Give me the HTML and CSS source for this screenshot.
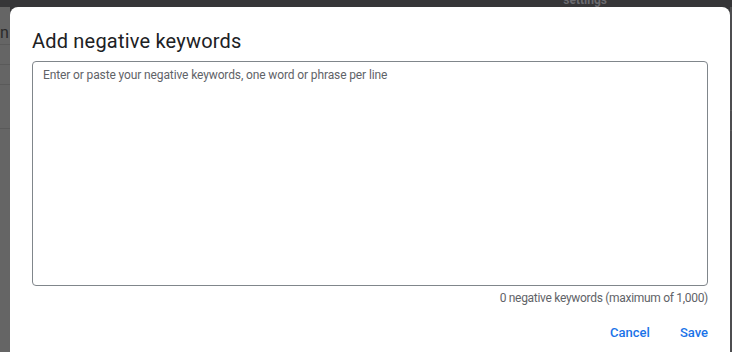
FILE: index.html
```html
<!DOCTYPE html>
<html dir="ltr" lang="en">

<head>
  <meta charset="utf-8" />
  <title>Add negative keywords</title>
  <link rel="stylesheet" href="styles.css">
</head>

<body>
  <div class="page">
    <header class="appbar">
      <span class="appbar-label">settings</span>
    </header>

    <div class="stage">
      <div class="behind behind-left">
        <span class="behind-heading">n</span>
        <div class="behind-row"></div>
        <div class="behind-row"></div>
        <div class="behind-row tall"></div>
        <div class="behind-row tall"></div>
      </div>

      <section class="dialog">
        <h2 class="dialog-title">Add negative keywords</h2>
        <textarea class="keywords" placeholder="Enter or paste your negative keywords, one word or phrase per line"></textarea>
        <div class="counter">0 negative keywords (maximum of 1,000)</div>
        <div class="actions">
          <button class="btn">Cancel</button>
          <button class="btn">Save</button>
        </div>
      </section>

      <div class="behind behind-right">
        <div class="behind-row"></div>
        <div class="behind-row tall"></div>
      </div>
    </div>
  </div>
</body>

</html>
```

FILE: styles.css
```css
html,
body {
  margin: 0;
  height: 100%;
}

body {
  font-family: Roboto, 'Liberation Sans', sans-serif;
  background: #646464;
  color: #202124;
  overflow: hidden;
}

.page {
  display: flex;
  flex-direction: column;
  height: 100%;
}

.appbar {
  height: 7px;
  flex-shrink: 0;
  background: #363638;
  overflow: hidden;
  display: flex;
  justify-content: flex-end;
  padding-right: 125px;
}

.appbar-label {
  font-size: 12px;
  font-weight: 700;
  line-height: 12px;
  margin-top: -6px;
  color: #6b6b70;
}

.stage {
  flex: 1;
  display: flex;
  background: #363638;
}

.behind {
  background: #656565;
  display: flex;
  flex-direction: column;
}

.behind-left {
  width: 10px;
  overflow: hidden;
}

.behind-right {
  width: 2px;
  background: #4e4e50;
  padding-top: 100px;
}

.behind-heading {
  font-size: 16px;
  line-height: 16px;
  margin-top: 18px;
  color: #2a2a2a;
}

.behind-row {
  height: 16px;
  border-top: 1px solid #5a5a5a;
  margin-top: 3px;
}

.behind-row.tall {
  height: 40px;
}

/* dialog */

.dialog {
  flex: 1;
  background: #fff;
  border-radius: 8px 8px 0 0;
  padding: 20px 22px 0 22px;
  display: flex;
  flex-direction: column;
}

.dialog-title {
  margin: 0;
  font-size: 20px;
  font-weight: 400;
  line-height: 28px;
  letter-spacing: 0.2px;
  color: #202124;
}

.keywords {
  margin-top: 6px;
  height: 225px;
  box-sizing: border-box;
  border: 1px solid #80868b;
  border-radius: 4px;
  padding: 5px 10px;
  font-family: Roboto, 'Liberation Sans', sans-serif;
  font-size: 12px;
  line-height: 16px;
  letter-spacing: -0.12px;
  color: #202124;
  resize: none;
  outline: none;
}

.keywords::placeholder {
  color: #5f6368;
  opacity: 1;
}

.counter {
  margin-top: 4px;
  text-align: right;
  font-size: 12px;
  line-height: 16px;
  letter-spacing: -0.3px;
  color: #5f6368;
}

.actions {
  display: flex;
  justify-content: flex-end;
  gap: 30px;
  margin-top: 17px;
}

.btn {
  border: 0;
  padding: 0;
  background: none;
  font-family: Roboto, 'Liberation Sans', sans-serif;
  font-size: 13px;
  font-weight: 500;
  line-height: 20px;
  color: #1a73e8;
  cursor: pointer;
}
```
